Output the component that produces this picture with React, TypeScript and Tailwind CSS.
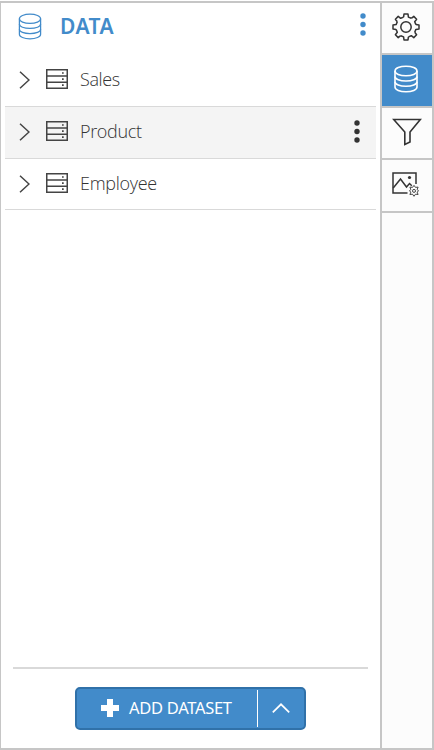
import React from 'react';

function Database({ className, width }: { className: string; width: number }) {
  return (
    <svg className={className} viewBox="0 0 24 28" fill="none" stroke="currentColor" strokeWidth={width}>
      <ellipse cx="12" cy="6" rx="11" ry="4.8" />
      <path d="M1 6v16c0 2.7 4.9 4.8 11 4.8s11-2.1 11-4.8V6" />
      <path d="M1 11.5c0 2.7 4.9 4.5 11 4.5s11-1.8 11-4.5M1 16.8c0 2.7 4.9 4.5 11 4.5s11-1.8 11-4.5" />
    </svg>
  );
}

function TableIcon() {
  return (
    <svg className="-mt-0.5 ml-4 h-5 w-[22px] shrink-0" viewBox="0 0 22 20" fill="none" stroke="#444" strokeWidth="1.5">
      <path d="M.75.75h20.5v18.5H.75zM.7 7h20.6M.7 13.2h20.6" />
      <path d="M16 4h1.7M16 10.2h1.7M16 16.2h1.7" strokeWidth="1.7" />
    </svg>
  );
}

function Dots({ className }: { className: string }) {
  return (
    <svg className={className} viewBox="0 0 6 23" fill="currentColor">
      <circle cx="3" cy="3" r="2.7" />
      <circle cx="3" cy="11.5" r="2.7" />
      <circle cx="3" cy="20" r="2.7" />
    </svg>
  );
}

function Row({ name, active = false, tracking }: { name: string; active?: boolean; tracking: string }) {
  return (
    <div className={`flex h-[52px] items-center border-b border-[#d9d9d9] pb-0.5 pl-[14px] pr-4 last:h-[51px] last:pb-0 ${active ? 'bg-[#f4f4f4]' : ''}`}>
      <svg className="h-[18px] w-[11px] shrink-0" viewBox="0 0 11 18" fill="none" stroke="#444" strokeWidth="1.5">
        <path d="m1 .8 9 8.2-9 8.2" />
      </svg>
      <TableIcon />
      <span className={`-mt-0.5 ml-3 font-['Open_Sans'] text-[18px] font-[360] leading-6 text-[#333] ${tracking}`}>{name}</span>
      {active && <Dots className="ml-auto h-[23px] w-1.5 text-[#333]" />}
    </div>
  );
}

const teeth = [0, 45, 90, 135, 180, 225, 270, 315];

function Gear() {
  return (
    <svg className="-ml-0.5 -mt-0.5 h-7 w-7" viewBox="-14 -14 28 28" fill="none" stroke="#333" strokeWidth="1.5">
      <circle r="5.2" />
      {teeth.map((a) => (
        <path key={a} transform={`rotate(${a})`} d="M-2.4-9.9-2-13H2L2.4-9.9 5.3-8.7" strokeLinejoin="round" />
      ))}
    </svg>
  );
}

function Filter() {
  return (
    <svg className="-mt-0.5 h-7 w-[30px]" viewBox="0 0 30 28" fill="none" stroke="#333" strokeWidth="1.6">
      <path d="M1.7 1.5h26.6L18 14v10L12.8 26.5V14Z" />
    </svg>
  );
}

function ImageSettings() {
  return (
    <svg className="-ml-0.5 -mt-1 h-[26px] w-7" viewBox="0 0 28 26" fill="none" stroke="#333" strokeWidth="1.5">
      <path d="M15.5 22H1V2h23v11" />
      <path d="m1.2 17 7.3-9 6 8 3-3.5 2.3 2.2" />
      <circle cx="17.5" cy="6.5" r="1.6" fill="#333" stroke="none" />
      <path d="m22 14.4 1.5 2 2.6-.3-1 2.5 1.5 1.2-1.5 1.3 1 2.4-2.6-.3-1.5 2.1-1.5-2.1-2.6.3 1-2.4-1.5-1.3 1.5-1.2-1-2.5 2.6.3Z" strokeWidth=".9" />
      <circle cx="22" cy="19.9" r="1.5" strokeWidth=".9" />
    </svg>
  );
}

export default function App() {
  return (
    <div className="flex h-[750px] w-[434px] flex-col bg-white pt-px font-['Noto_Sans','Open_Sans',sans-serif]">
      <div className="flex h-[749px] border-2 border-l border-[#c6c6c6]">
        <main className="flex w-[379px] shrink-0 flex-col">
          <header className="flex h-[52px] items-center pl-[17px] pr-[14px] text-[#428bca]">
            <Database className="mt-[-5px] h-[27px] w-6" width={1.3} />
            <h1 className="-mt-1 ml-[18px] text-[21px] font-semibold tracking-[.5px]">DATA</h1>
            <Dots className="-mt-2.5 ml-auto h-[23px] w-1.5" />
          </header>
          <section className="ml-1 mr-1">
            <Row name="Sales" tracking="tracking-[-.4px]" />
            <Row name="Product" tracking="tracking-[-.35px]" active />
            <Row name="Employee" tracking="tracking-[-.3px]" />
          </section>
          <footer className="ml-3 mr-3 mt-auto h-[81px] border-t-2 border-[#d9d9d9] pt-[18px]">
            <div className="ml-[62px] flex h-[43px] w-[231px] rounded-[5px] border-2 border-[#3071a9] bg-[#428bca] text-white">
              <button className="flex w-[180px] items-center pl-6">
                <svg className="-mt-0.5 h-[18px] w-[18px]" viewBox="0 0 18 18" fill="currentColor">
                  <path d="M6 0h6v6h6v6h-6v6H6v-6H0V6h6Z" />
                </svg>
                <span className="-mt-px ml-2.5 whitespace-nowrap text-[16.5px] tracking-[-.3px]">ADD DATASET</span>
              </button>
              <button className="my-px flex flex-1 items-center justify-center border-l border-white pb-px">
                <svg className="h-2.5 w-[18px]" viewBox="0 0 18 10" fill="none" stroke="currentColor" strokeWidth="1.7">
                  <path d="m.8 9.3 8.2-8 8.2 8" />
                </svg>
              </button>
            </div>
          </footer>
        </main>
        <nav className="flex w-[52px] shrink-0 flex-col border-l-2 border-[#c6c6c6] bg-[#fcfcfc]">
          <button className="flex h-[52px] items-center justify-center border-b-2 border-[#c6c6c6]"><Gear /></button>
          <button className="flex h-[53px] items-center justify-center border-b-2 border-[#c6c6c6] bg-[#428bca] text-white">
            <Database className="-ml-0.5 -mt-1 h-7 w-6" width={1.6} />
          </button>
          <button className="flex h-[52px] items-center justify-center border-b-2 border-[#c6c6c6]"><Filter /></button>
          <button className="flex h-[53px] items-center justify-center border-b-2 border-[#c6c6c6]"><ImageSettings /></button>
        </nav>
      </div>
    </div>
  );
}
